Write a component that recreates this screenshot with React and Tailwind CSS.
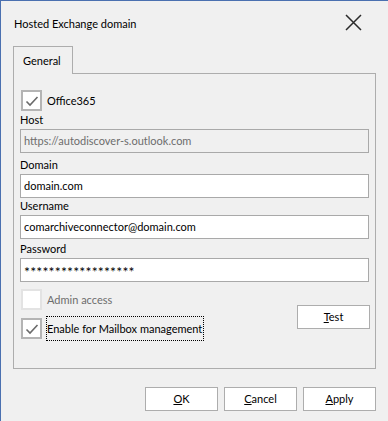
import React from "react";

function Check() {
  return (
    <svg width="14" height="12" viewBox="0 0 14 12" className="block">
      <path d="M1.5 6.5 L5 10 L12.5 2" fill="none" stroke="#6a6a6a" strokeWidth="1.6" />
    </svg>
  );
}

function CheckBox({ checked, disabled }) {
  return (
    <div
      className={
        "w-[21px] h-[21px] flex items-center justify-center bg-white border-2 " +
        (disabled ? "border-[#e3e3e3]" : "border-[#b4b4b4]")
      }
    >
      {checked && <Check />}
    </div>
  );
}

function Field({ label, value, disabled, pt }) {
  return (
    <div className="flex flex-col">
      <div className={"leading-[16px] pb-[1px] " + pt}>{label}</div>
      <div
        className={
          "h-[24px] w-[349px] border border-[#a9a9a9] flex items-center pl-[3px] " +
          (disabled ? "bg-[#f0f0f0] text-[#6d6d6d]" : "bg-white text-black")
        }
      >
        {value}
      </div>
    </div>
  );
}

function Btn({ children }) {
  return (
    <div className="w-[73px] h-[24px] bg-white border border-[#adadad] flex items-center justify-center text-black">
      {children}
    </div>
  );
}

export default function App() {
  return (
    <div
      className="w-[388px] h-[421px] bg-[#f0f0f0] border-l border-t border-[#4a70b0] text-[11px] text-black overflow-hidden"
      style={{ fontFamily: 'Lato, Roboto, "Noto Sans", sans-serif' }}
    >
      <div className="h-[45px] flex items-start justify-between">
        <div className="pl-[13px] pt-[15px] leading-[16px]">Hosted Exchange domain</div>
        <div className="pt-[13px] pr-[26px]">
          <svg width="17" height="17" viewBox="0 0 17 17" className="block">
            <path d="M1 1 L16 16 M16 1 L1 16" stroke="#2b2b2b" strokeWidth="1.5" />
          </svg>
        </div>
      </div>
      <div className="ml-[12px] w-[363px]">
        <div className="flex">
          <div className="w-[60px] h-[28px] border border-b-0 border-[#adadad] bg-[#f0f0f0] pl-[9px] pt-[6px] leading-[16px] -mb-[1px] relative z-10">
            General
          </div>
        </div>
        <div className="h-[296px] border border-[#adadad] pl-[6px] pr-[5px] pt-[16px]">
          <div className="flex items-center gap-[5px] ml-[1px]">
            <CheckBox checked />
            <span className="leading-[16px]">Office365</span>
          </div>
          <Field pt="pt-[1px]" label="Host" value="https://autodiscover-s.outlook.com" disabled />
          <Field pt="pt-[4px]" label="Domain" value="domain.com" />
          <Field pt="pt-[0px]" label="Username" value="comarchiveconnector@domain.com" />
          <Field
            pt="pt-[2px]"
            label="Password"
            value={<span className="tracking-[0.2px] text-[14px] leading-[16px] pt-[3px]">******************</span>}
          />
          <div className="flex justify-between">
            <div className="flex flex-col gap-[6px] pt-[7px] ml-[1px]">
              <div className="flex items-center gap-[5px]">
                <CheckBox disabled />
                <span className="text-[#6d6d6d] leading-[16px]">Admin access</span>
              </div>
              <div className="flex items-center gap-[4px]">
                <CheckBox checked />
                <span className="leading-[16px] border border-dotted border-black h-[25px] flex items-center pr-[1px] pl-[0px]">
                  Enable for Mailbox management
                </span>
              </div>
            </div>
            <div className="pt-[23px]">
              <Btn>
                <span><span className="underline">T</span>est</span>
              </Btn>
            </div>
          </div>
        </div>
        <div className="flex justify-end gap-[6px] mt-[18px]">
          <Btn><span><span className="underline">O</span>K</span></Btn>
          <Btn><span><span className="underline">C</span>ancel</span></Btn>
          <Btn><span><span className="underline">A</span>pply</span></Btn>
        </div>
      </div>
    </div>
  );
}
